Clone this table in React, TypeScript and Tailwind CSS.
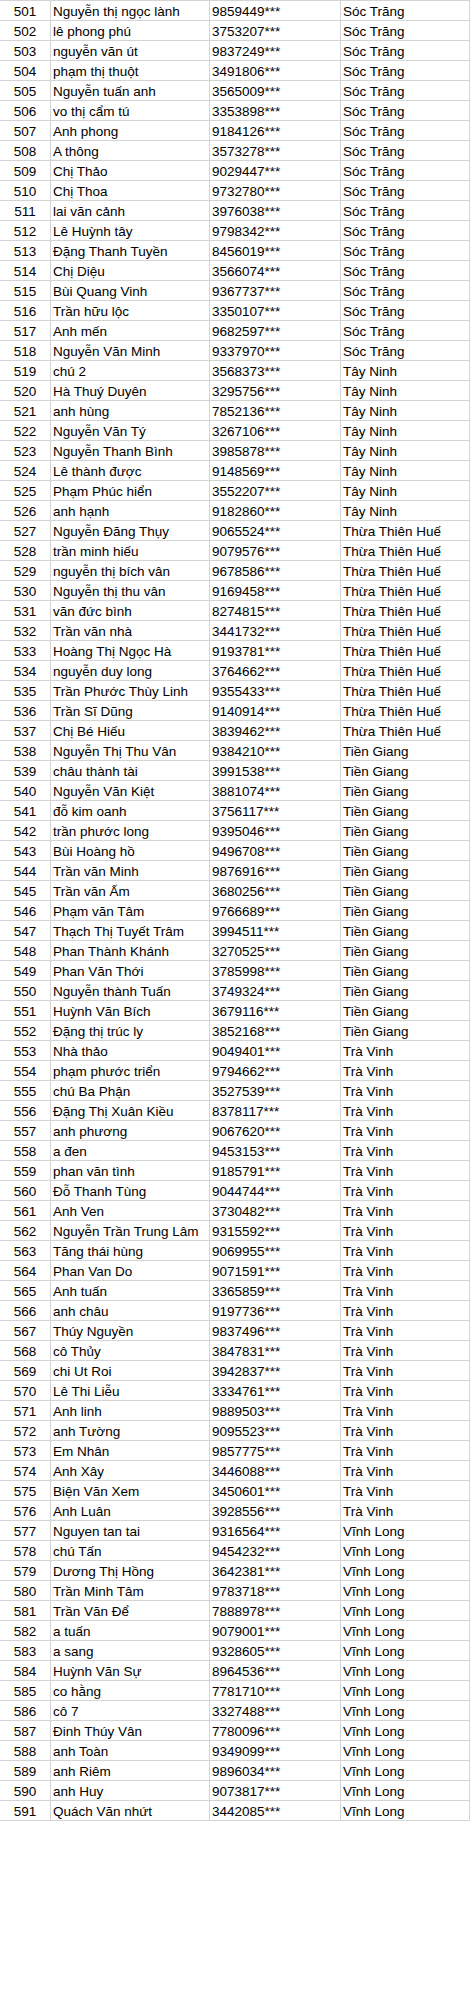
const rows: [string, string, string][] = [
  ['Nguyễn thị ngọc lành', '9859449', 'Sóc Trăng'],
  ['lê phong phú', '3753207', 'Sóc Trăng'],
  ['nguyễn văn út', '9837249', 'Sóc Trăng'],
  ['phạm thị thuột', '3491806', 'Sóc Trăng'],
  ['Nguyễn tuấn anh', '3565009', 'Sóc Trăng'],
  ['vo thị cẩm tú', '3353898', 'Sóc Trăng'],
  ['Anh phong', '9184126', 'Sóc Trăng'],
  ['A thông', '3573278', 'Sóc Trăng'],
  ['Chị Thảo', '9029447', 'Sóc Trăng'],
  ['Chị Thoa', '9732780', 'Sóc Trăng'],
  ['lai văn cảnh', '3976038', 'Sóc Trăng'],
  ['Lê Huỳnh tây', '9798342', 'Sóc Trăng'],
  ['Đặng Thanh Tuyền', '8456019', 'Sóc Trăng'],
  ['Chị Diệu', '3566074', 'Sóc Trăng'],
  ['Bùi Quang Vinh', '9367737', 'Sóc Trăng'],
  ['Trần hữu lộc', '3350107', 'Sóc Trăng'],
  ['Anh mến', '9682597', 'Sóc Trăng'],
  ['Nguyễn Văn Minh', '9337970', 'Sóc Trăng'],
  ['chú 2', '3568373', 'Tây Ninh'],
  ['Hà Thuý Duyên', '3295756', 'Tây Ninh'],
  ['anh hùng', '7852136', 'Tây Ninh'],
  ['Nguyễn Văn Tý', '3267106', 'Tây Ninh'],
  ['Nguyễn Thanh Bình', '3985878', 'Tây Ninh'],
  ['Lê thành được', '9148569', 'Tây Ninh'],
  ['Phạm Phúc hiển', '3552207', 'Tây Ninh'],
  ['anh hạnh', '9182860', 'Tây Ninh'],
  ['Nguyễn Đăng Thụy', '9065524', 'Thừa Thiên Huế'],
  ['trần minh hiếu', '9079576', 'Thừa Thiên Huế'],
  ['nguyễn thị bích vân', '9678586', 'Thừa Thiên Huế'],
  ['Nguyễn thị thu vân', '9169458', 'Thừa Thiên Huế'],
  ['văn đức bình', '8274815', 'Thừa Thiên Huế'],
  ['Trần văn nhà', '3441732', 'Thừa Thiên Huế'],
  ['Hoàng Thị Ngọc Hà', '9193781', 'Thừa Thiên Huế'],
  ['nguyễn duy long', '3764662', 'Thừa Thiên Huế'],
  ['Trần Phước Thùy Linh', '9355433', 'Thừa Thiên Huế'],
  ['Trần Sĩ Dũng', '9140914', 'Thừa Thiên Huế'],
  ['Chị Bé Hiếu', '3839462', 'Thừa Thiên Huế'],
  ['Nguyễn Thị Thu Vân', '9384210', 'Tiền Giang'],
  ['châu thành tài', '3991538', 'Tiền Giang'],
  ['Nguyễn Văn Kiệt', '3881074', 'Tiền Giang'],
  ['đỗ kim oanh', '3756117', 'Tiền Giang'],
  ['trần phước long', '9395046', 'Tiền Giang'],
  ['Bùi Hoàng hồ', '9496708', 'Tiền Giang'],
  ['Trần văn Minh', '9876916', 'Tiền Giang'],
  ['Trần văn Ấm', '3680256', 'Tiền Giang'],
  ['Phạm văn Tâm', '9766689', 'Tiền Giang'],
  ['Thạch Thị Tuyết Trâm', '3994511', 'Tiền Giang'],
  ['Phan Thành Khánh', '3270525', 'Tiền Giang'],
  ['Phan Văn Thới', '3785998', 'Tiền Giang'],
  ['Nguyễn thành Tuấn', '3749324', 'Tiền Giang'],
  ['Huỳnh Văn Bích', '3679116', 'Tiền Giang'],
  ['Đặng thị trúc ly', '3852168', 'Tiền Giang'],
  ['Nhà thảo', '9049401', 'Trà Vinh'],
  ['phạm phước triển', '9794662', 'Trà Vinh'],
  ['chú Ba Phận', '3527539', 'Trà Vinh'],
  ['Đặng Thị Xuân Kiều', '8378117', 'Trà Vinh'],
  ['anh phương', '9067620', 'Trà Vinh'],
  ['a đen', '9453153', 'Trà Vinh'],
  ['phan văn tình', '9185791', 'Trà Vinh'],
  ['Đỗ Thanh Tùng', '9044744', 'Trà Vinh'],
  ['Anh Ven', '3730482', 'Trà Vinh'],
  ['Nguyễn Trần Trung Lâm', '9315592', 'Trà Vinh'],
  ['Tăng thái hùng', '9069955', 'Trà Vinh'],
  ['Phan Van Do', '9071591', 'Trà Vinh'],
  ['Anh tuấn', '3365859', 'Trà Vinh'],
  ['anh châu', '9197736', 'Trà Vinh'],
  ['Thúy Nguyền', '9837496', 'Trà Vinh'],
  ['cô Thủy', '3847831', 'Trà Vinh'],
  ['chi Ut Roi', '3942837', 'Trà Vinh'],
  ['Lê Thi Liễu', '3334761', 'Trà Vinh'],
  ['Anh linh', '9889503', 'Trà Vinh'],
  ['anh Tường', '9095523', 'Trà Vinh'],
  ['Em Nhân', '9857775', 'Trà Vinh'],
  ['Anh Xây', '3446088', 'Trà Vinh'],
  ['Biện Văn Xem', '3450601', 'Trà Vinh'],
  ['Anh Luân', '3928556', 'Trà Vinh'],
  ['Nguyen tan tai', '9316564', 'Vĩnh Long'],
  ['chú Tấn', '9454232', 'Vĩnh Long'],
  ['Dương Thị Hồng', '3642381', 'Vĩnh Long'],
  ['Trần Minh Tâm', '9783718', 'Vĩnh Long'],
  ['Trần Văn Để', '7888978', 'Vĩnh Long'],
  ['a tuấn', '9079001', 'Vĩnh Long'],
  ['a sang', '9328605', 'Vĩnh Long'],
  ['Huỳnh Văn Sự', '8964536', 'Vĩnh Long'],
  ['co hằng', '7781710', 'Vĩnh Long'],
  ['cô 7', '3327488', 'Vĩnh Long'],
  ['Đinh Thúy Vân', '7780096', 'Vĩnh Long'],
  ['anh Toàn', '9349099', 'Vĩnh Long'],
  ['anh Riêm', '9896034', 'Vĩnh Long'],
  ['anh Huy', '9073817', 'Vĩnh Long'],
  ['Quách Văn nhứt', '3442085', 'Vĩnh Long'],
];

// one spreadsheet row, 20px tall with gridlines
function SheetRow({ no, name, phone, province }: { no: number; name: string; phone: string; province: string }) {
  const cell = 'h-[20px] border-r border-b border-[#d4d4d4] pt-[2px] leading-[17px] whitespace-nowrap overflow-hidden';
  return (
    <div className="flex">
      <div className={`${cell} w-[51px] text-center`}>{no}</div>
      <div className={`${cell} w-[159px] pl-[2px]`}>{name}</div>
      <div className={`${cell} w-[131px] pl-[2px]`}>{phone}***</div>
      <div className={`${cell} w-[129px] pl-[2px]`}>{province}</div>
    </div>
  );
}

export default function App() {
  return (
    <div
      className="min-h-[2001px] w-[472px] bg-white text-[13.5px] text-black"
      style={{ fontFamily: '"Liberation Sans", Arial, sans-serif' }}
    >
      <div className="w-[470px] border-t border-[#d4d4d4]">
        {rows.map(([name, phone, province], i) => (
          <SheetRow key={i} no={501 + i} name={name} phone={phone} province={province} />
        ))}
      </div>
    </div>
  );
}
